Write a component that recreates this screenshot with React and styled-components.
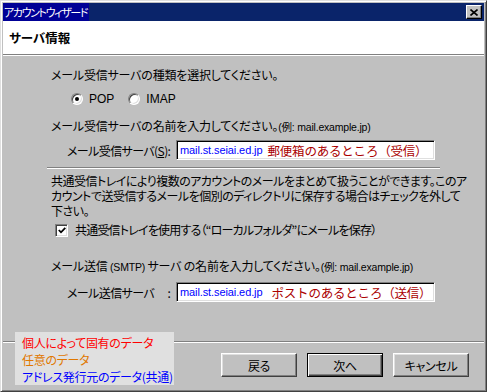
import React from "react";
import styled, { createGlobalStyle } from "styled-components";

const Global = createGlobalStyle`
  html, body { margin: 0; padding: 0; background: #c0c0c0; }
  * { box-sizing: border-box; }
  body {
    font-family: "Noto Sans CJK JP", "Noto Sans", sans-serif;
    font-feature-settings: "palt";
    font-size: 12px;
    color: #000;
  }
`;

const Window = styled.div`
  position: relative;
  width: 487px;
  height: 392px;
  display: flex;
  flex-direction: column;
  background: #c0c0c0;
  border: 1px solid;
  border-color: #dfdfdf #404040 #404040 #dfdfdf;
  box-shadow: inset 1px 1px #fff, inset -1px -1px #808080;
  padding: 2px;
`;

const TitleBar = styled.div`
  height: 18px;
  flex: none;
  display: flex;
  align-items: center;
  background: #0a246a;
`;

const TitleText = styled.span`
  height: 18px;
  line-height: 18px;
  padding: 0 2px 0 1px;
  background: #000096;
  color: #fff;
  font-size: 11px;
  letter-spacing: -1.4px;
`;

const CloseButton = styled.div`
  margin-left: auto;
  margin-right: 2px;
  width: 16px;
  height: 14px;
  display: flex;
  align-items: center;
  justify-content: center;
  background: #c0c0c0;
  border: 1px solid;
  border-color: #fff #000 #000 #fff;
  box-shadow: inset -1px -1px #808080;
`;

const Header = styled.div`
  height: 34px;
  flex: none;
  display: flex;
  align-items: center;
  padding-left: 6px;
  background: #fff;
  font-weight: bold;
  font-size: 12.5px;
  border-bottom: 1px solid #808080;
  box-shadow: 0 1px #fff;
`;

const Body = styled.div`
  flex: 1;
  display: flex;
  flex-direction: column;
  padding-left: 48px;
  margin-top: 1px;
`;

const Text = styled.div`
  line-height: ${(p) => p.$lh || 16}px;
  margin-top: ${(p) => p.$mt || 0}px;
  letter-spacing: ${(p) => p.$ls ?? -0.2}px;
  white-space: nowrap;
`;

const Lat = styled.span`
  font-family: "Liberation Sans", "Noto Sans CJK JP", sans-serif;
  font-size: 10.5px;
  letter-spacing: -0.2px;
`;

const RadioRow = styled.div`
  display: flex;
  align-items: center;
  height: 16px;
  margin-top: 8px;
  padding-left: 20px;
`;

const RadioItem = styled.label`
  display: flex;
  align-items: center;
  margin-right: 14px;
`;

const RadioCircle = styled.span`
  width: 12px;
  height: 12px;
  border-radius: 50%;
  background: #fff;
  border: 1px solid;
  border-color: #808080 #fff #fff #808080;
  box-shadow: inset 1px 1px #404040, inset -1px -1px #dfdfdf;
  display: flex;
  align-items: center;
  justify-content: center;
  margin-right: 6px;
  &::after {
    content: "";
    width: 4px;
    height: 4px;
    border-radius: 50%;
    background: ${(p) => (p.$checked ? "#000" : "transparent")};
  }
`;

const LatinLabel = styled.span`
  font-family: "Liberation Sans", "DejaVu Sans", sans-serif;
  font-size: 12px;
`;

const InputRow = styled.div`
  display: flex;
  align-items: center;
  margin-top: ${(p) => p.$mt}px;
  padding-left: 16px;
`;

const FieldLabel = styled.span`
  width: 109px;
  flex: none;
  letter-spacing: -0.6px;
  white-space: nowrap;
`;

const Input = styled.div`
  width: 259px;
  height: 20px;
  display: flex;
  align-items: center;
  padding-left: 3px;
  background: #fff;
  border: 1px solid;
  border-color: #808080 #fff #fff #808080;
  box-shadow: inset 1px 1px #000, inset -1px -1px #dfdfdf;
  white-space: nowrap;
  overflow: hidden;
`;

const Address = styled.span`
  font-family: "Liberation Sans", "DejaVu Sans", sans-serif;
  font-size: 11px;
  letter-spacing: -0.1px;
  color: #0000ff;
`;

const Note = styled.span`
  font-size: 12.5px;
  color: #aa0000;
  margin-left: ${(p) => p.$ml}px;
  font-feature-settings: normal;
  letter-spacing: -0.2px;
`;

const Separator = styled.div`
  margin-top: 7px;
  margin-left: -4px;
  width: 393px;
  height: 2px;
  border-top: 1px solid #808080;
  border-bottom: 1px solid #fff;
`;

const CheckRow = styled.label`
  display: flex;
  align-items: center;
  height: 16px;
  margin-top: 4px;
  padding-left: 4px;
`;

const CheckBox = styled.span`
  width: 13px;
  height: 13px;
  flex: none;
  background: #fff;
  border: 1px solid;
  border-color: #808080 #fff #fff #808080;
  box-shadow: inset 1px 1px #404040, inset -1px -1px #dfdfdf;
  display: flex;
  align-items: center;
  justify-content: center;
  margin-right: 7px;
`;

const Footer = styled.div`
  flex: none;
  height: 48px;
  display: flex;
  justify-content: flex-end;
  align-items: flex-start;
  gap: 10px;
  padding: 11px 15px 0 0;
  border-top: 1px solid #808080;
  box-shadow: inset 0 1px #fff;
`;

const Button = styled.button`
  width: 76px;
  height: 24px;
  font-family: inherit;
  font-feature-settings: "palt";
  font-size: 12px;
  letter-spacing: -0.3px;
  color: #000;
  background: #c0c0c0;
  padding: 0;
  border: 1px solid;
  border-color: ${(p) => (p.$default ? "#000" : "#fff #404040 #404040 #fff")};
  box-shadow: ${(p) =>
    p.$default
      ? "inset 1px 1px #fff, inset -1px -1px #404040, inset -2px -2px #808080"
      : "inset -1px -1px #808080, inset 1px 1px #dfdfdf"};
`;

const Legend = styled.div`
  position: absolute;
  left: 14px;
  top: 331px;
  width: 159px;
  height: 53px;
  padding: 2px 0 0 7px;
  background: #e0e0e0;
`;

const LegendLine = styled.div`
  line-height: 17px;
  font-size: 12px;
  letter-spacing: -0.3px;
  color: ${(p) => p.$color};
  white-space: nowrap;
`;

export default function App() {
  return (
    <>
      <Global />
      <Window>
        <TitleBar>
          <TitleText>アカウントウィザード</TitleText>
          <CloseButton>
            <svg width="8" height="7" viewBox="0 0 8 7">
              <path d="M0.5 0.5 L7.5 6.5 M7.5 0.5 L0.5 6.5" stroke="#000" strokeWidth="1.6" />
            </svg>
          </CloseButton>
        </TitleBar>
        <Header>サーバ情報</Header>
        <Body>
          <Text $mt={11}>メール受信サーバの種類を選択してください。</Text>
          <RadioRow>
            <RadioItem>
              <RadioCircle $checked />
              <LatinLabel>POP</LatinLabel>
            </RadioItem>
            <RadioItem>
              <RadioCircle />
              <LatinLabel>IMAP</LatinLabel>
            </RadioItem>
          </RadioRow>
          <Text $mt={11}>
            メール受信サーバの名前を入力してください。<Lat>(例: mail.example.jp)</Lat>
          </Text>
          <InputRow $mt={5}>
            <FieldLabel>
              メール受信サーバ(<u>S</u>):
            </FieldLabel>
            <Input>
              <Address>mail.st.seiai.ed.jp</Address>
              <Note $ml={5}>郵便箱のあるところ（受信）</Note>
            </Input>
          </InputRow>
          <Separator />
          <Text $mt={4} $lh={15} $ls={-0.5}>
            共通受信トレイにより複数のアカウントのメールをまとめて扱うことができます。このア
            <br />
            カウントで送受信するメールを個別のディレクトリに保存する場合はチェックを外して
            <br />
            下さい。
          </Text>
          <CheckRow>
            <CheckBox>
              <svg width="8" height="7" viewBox="0 0 8 7">
                <path d="M0.8 3 L3 5.3 L7.3 0.8" stroke="#000" strokeWidth="1.8" fill="none" />
              </svg>
            </CheckBox>
            <Text $ls={-0.8}>共通受信トレイを使用する（“ローカルフォルダ”にメールを保存）</Text>
          </CheckRow>
          <Text $mt={20}>
            メール送信 <Lat>(SMTP)</Lat> サーバ の名前を入力してください。<Lat>(例: mail.example.jp)</Lat>
          </Text>
          <InputRow $mt={7}>
            <FieldLabel>メール送信サーバ　 :</FieldLabel>
            <Input>
              <Address>mail.st.seiai.ed.jp</Address>
              <Note $ml={9}>ポストのあるところ（送信）</Note>
            </Input>
          </InputRow>
        </Body>
        <Footer>
          <Button>戻る</Button>
          <Button $default>次へ</Button>
          <Button>キャンセル</Button>
        </Footer>
        <Legend>
          <LegendLine $color="#ff0000">個人によって固有のデータ</LegendLine>
          <LegendLine $color="#e07800">任意のデータ</LegendLine>
          <LegendLine $color="#0000ff">アドレス発行元のデータ(共通)</LegendLine>
        </Legend>
      </Window>
    </>
  );
}
